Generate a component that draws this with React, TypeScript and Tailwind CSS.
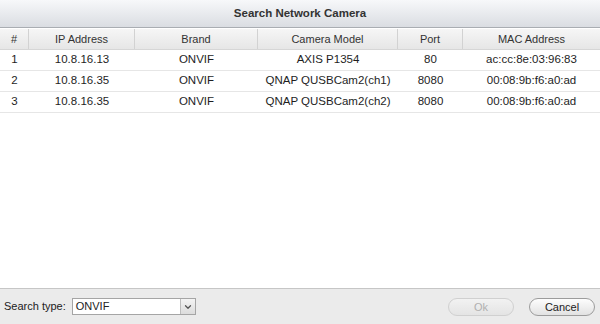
import { ChevronDown } from "lucide-react";

const rows = [
  { n: 1, ip: "10.8.16.13", brand: "ONVIF", model: "AXIS P1354", port: "80", mac: "ac:cc:8e:03:96:83" },
  { n: 2, ip: "10.8.16.35", brand: "ONVIF", model: "QNAP QUSBCam2(ch1)", port: "8080", mac: "00:08:9b:f6:a0:ad" },
  { n: 3, ip: "10.8.16.35", brand: "ONVIF", model: "QNAP QUSBCam2(ch2)", port: "8080", mac: "00:08:9b:f6:a0:ad" },
];

const cols = "grid grid-cols-[29px_106px_123px_140px_65px_1fr]";

export default function App() {
  return (
    <div
      className="w-[600px] h-[324px] flex flex-col bg-white text-[11px] text-[#1e1e1e]"
      style={{ fontFamily: '"Liberation Sans", Arial, sans-serif' }}
    >
      {/* Title bar */}
      <div className="h-[28px] shrink-0 flex items-center justify-center bg-gradient-to-b from-[#f7f8fa] to-[#dadde2] border-b border-[#a9adb2] font-bold text-[11.5px] text-[#333]">
        Search Network Camera
      </div>

      {/* Table */}
      <div className="flex-1 flex flex-col">
        <div className={`${cols} h-[21px] mt-px bg-gradient-to-b from-[#f6f6f6] to-[#e6e6e6] border-b border-[#d6d6d6] text-[#333]`}>
          {["#", "IP Address", "Brand", "Camera Model", "Port", "MAC Address"].map((h, i) => (
            <div
              key={h}
              className={`flex items-center justify-center ${i < 5 ? "border-r border-[#d2d2d2]" : ""}`}
            >
              {h}
            </div>
          ))}
        </div>
        {rows.map((r) => (
          <div key={r.n} className={`${cols} h-[21px] border-b border-[#e6e6e6] text-[11.5px]`}>
            <div className="flex items-center justify-center">{r.n}</div>
            <div className="flex items-center justify-center">{r.ip}</div>
            <div className="flex items-center justify-center">{r.brand}</div>
            <div className="flex items-center justify-center">{r.model}</div>
            <div className="flex items-center justify-center">{r.port}</div>
            <div className="flex items-center justify-center">{r.mac}</div>
          </div>
        ))}
      </div>

      {/* Footer */}
      <div className="h-[36px] shrink-0 flex items-center justify-between px-[4px] bg-[#ebebeb] border-t border-[#c6c6c6]">
        <div className="flex items-center gap-[6px]">
          <span className="text-[#222]">Search type:</span>
          <div className="flex h-[17px] w-[124px] border border-[#a5a5a5] bg-white">
            <div className="flex-1 flex items-center px-[3px] text-[#222]">ONVIF</div>
            <div className="w-[15px] flex items-center justify-center bg-gradient-to-b from-[#f4f4f4] to-[#dcdcdc] border-l border-[#bdbdbd]">
              <ChevronDown size={10} strokeWidth={3} className="text-[#555]" />
            </div>
          </div>
        </div>
        <div className="flex items-center gap-[15px] pr-[1px]">
          <button className="w-[66px] h-[18px] rounded-full border border-[#d0d0d0] bg-gradient-to-b from-[#f2f2f2] to-[#e4e4e4] text-[#b0b0b0] text-[11px]">
            Ok
          </button>
          <button className="w-[66px] h-[18px] rounded-full border border-[#9c9c9c] bg-gradient-to-b from-[#fdfdfd] to-[#e2e2e2] text-[#222] text-[11px]">
            Cancel
          </button>
        </div>
      </div>
    </div>
  );
}
